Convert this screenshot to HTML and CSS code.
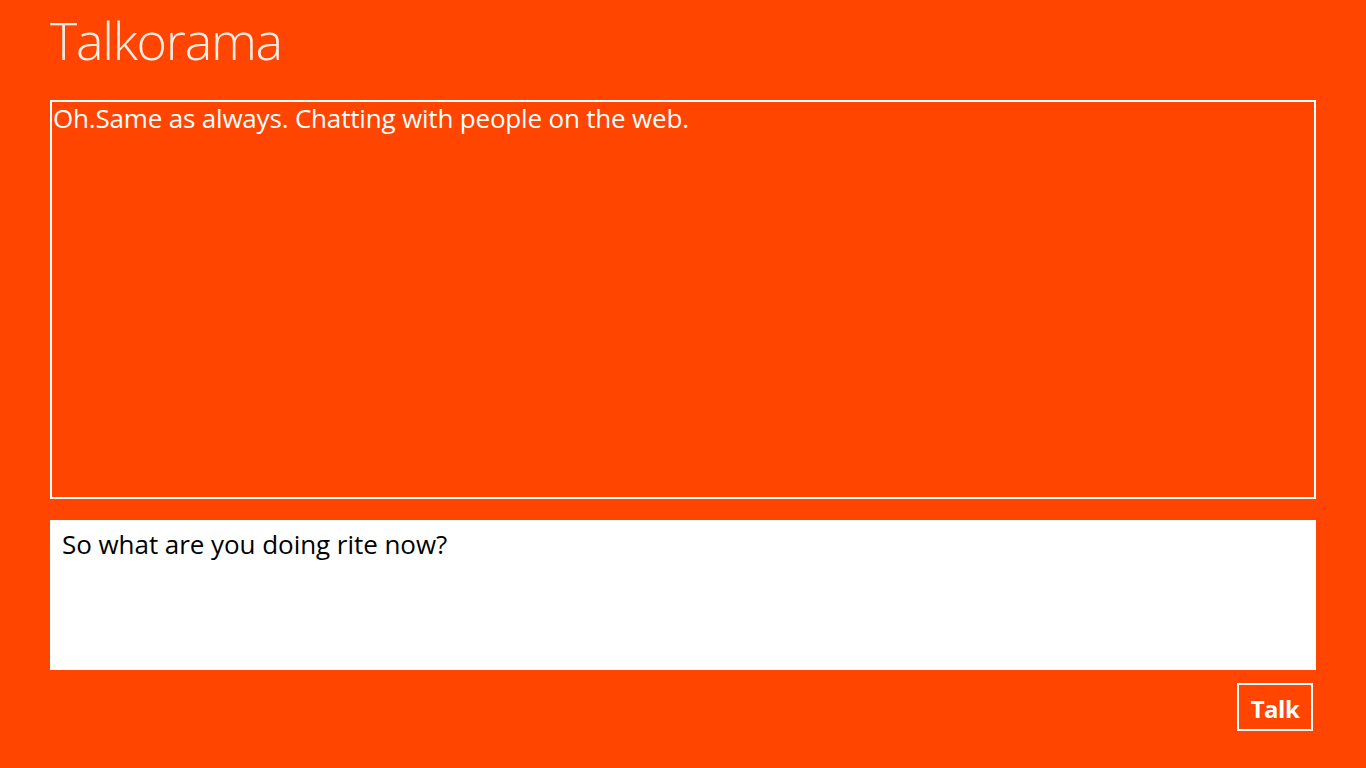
FILE: index.html
```html
<!DOCTYPE html>
<html>
<head>
<meta charset="utf-8">
<link rel="stylesheet" href="styles.css">
</head>
<body>
<div class="page">
  <h1 class="title">Talkorama</h1>
  <div class="output">Oh.Same as always. Chatting with people on the web.</div>
  <div class="input">So what are you doing rite now?</div>
  <div class="actions"><button class="talk">Talk</button></div>
</div>
</body>
</html>
```
FILE: styles.css
```css
html, body {
  margin: 0;
  padding: 0;
  background: #ff4500;
  height: 100%;
}
.page {
  padding: 0 50px 0 50px;
  font-family: "Open Sans", "Noto Sans", sans-serif;
  display: flex;
  flex-direction: column;
}
.title {
  margin: 0;
  height: 100px;
  font-weight: 300;
  font-size: 52px;
  line-height: 80px;
  color: #ffeee6;
  letter-spacing: -1.3px;
}
.output {
  height: 395px;
  border: 2px solid #fff;
  color: #fff;
  font-size: 26px;
  line-height: 32px;
  padding: 0 0 0 1px;
  letter-spacing: -0.18px;
}
.input {
  margin-top: 21px;
  height: 150px;
  background: #fff;
  color: #000;
  font-size: 26px;
  padding: 8px 12px;
  box-sizing: border-box;
  line-height: 32px;
  letter-spacing: -0.05px;
}
.actions {
  display: flex;
  justify-content: flex-end;
  margin-top: 13px;
  padding-right: 3px;
}
.talk {
  width: 76px;
  height: 48px;
  border: 2px solid #fff;
  background: transparent;
  color: #fff;
  font-family: "Open Sans", "Noto Sans", sans-serif;
  font-weight: 700;
  font-size: 24px;
  padding: 2px 0 0 0;
  letter-spacing: -0.5px;
}
```
